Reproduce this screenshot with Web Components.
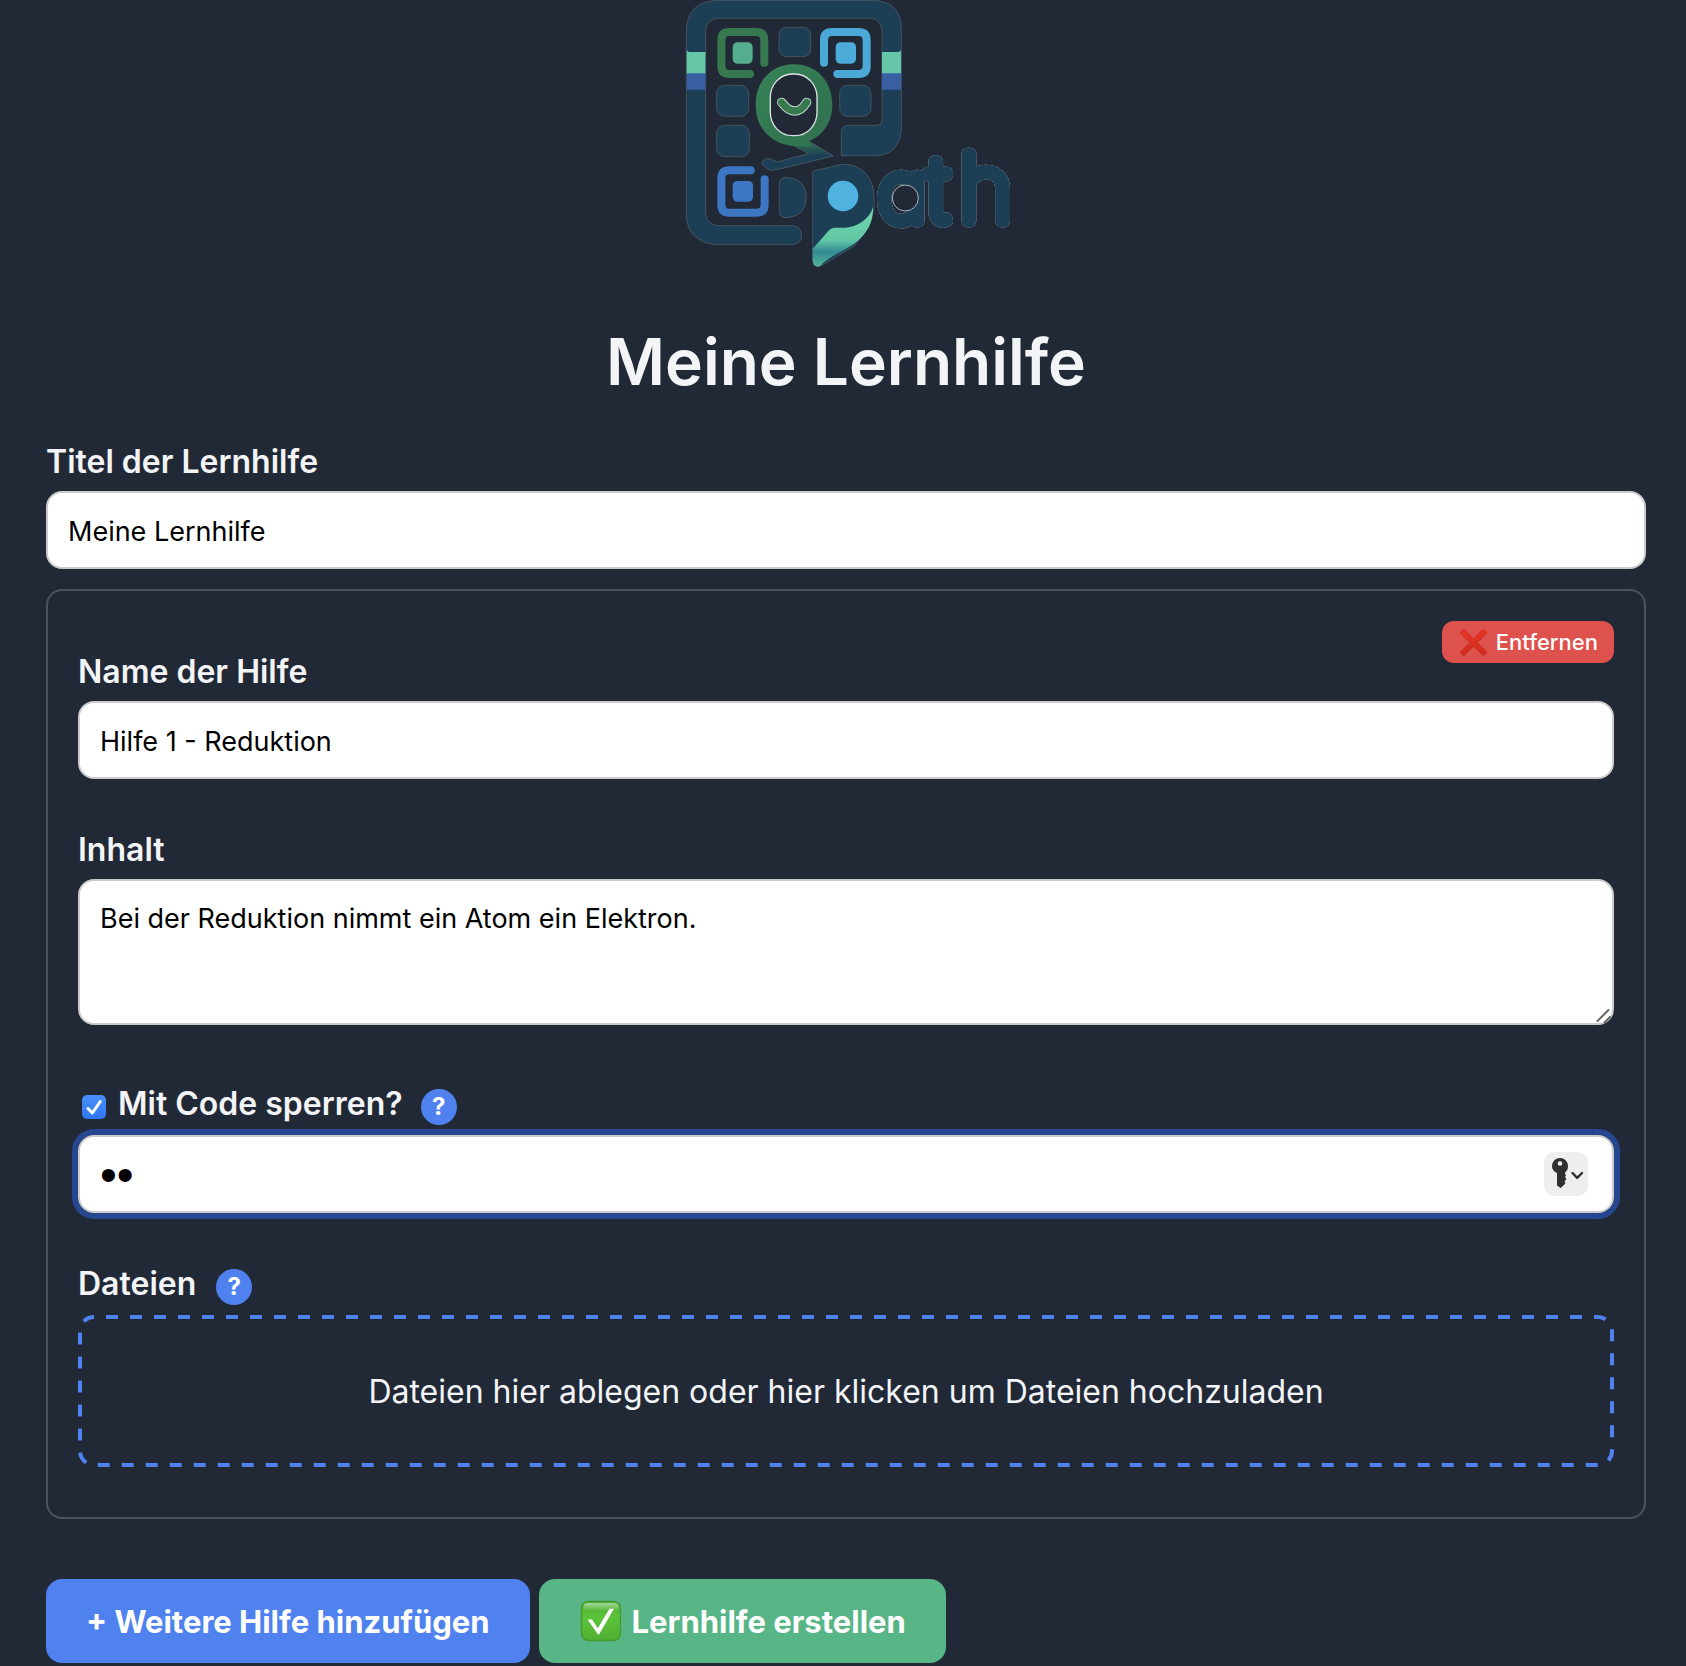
<!DOCTYPE html>
<html lang="de">
<head>
<meta charset="utf-8">
<meta name="viewport" content="width=device-width, initial-scale=1">
<title>Meine Lernhilfe</title>
<style>
  :root {
    --bg: #222936;
    --ink: #f3f4f6;
    --blue: #4f82ee;
    --green: #57b586;
    --red: #dd524c;
    --line: #4d525f;
    --ring: #264790;
  }
  body {
    margin: 0;
    background: var(--bg);
    color: var(--ink);
    font-family: Inter, "Liberation Sans", sans-serif;
    font-size: 32px;
    line-height: 39px;
  }
</style>
</head>
<body>
<lernhilfe-page></lernhilfe-page>

<template id="tpl-page">
  <style>
    :host { display: block; padding: 0 40px 3px 46px; }
    header { display: flex; flex-direction: column; align-items: center; gap: 56px; }
    h1 { margin: 0; font-size: 64px; line-height: 78px; font-weight: 600; }
    main { display: flex; flex-direction: column; gap: 20px; margin-top: 41px; }
    footer { display: flex; flex-wrap: wrap; gap: 9px; margin-top: 60px; }
  </style>
  <header>
    <qpath-logo></qpath-logo>
    <h1>Meine Lernhilfe</h1>
  </header>
  <main>
    <text-field label="Titel der Lernhilfe" value="Meine Lernhilfe"></text-field>
    <hilfe-card></hilfe-card>
  </main>
  <footer>
    <action-button>+ Weitere Hilfe hinzufügen</action-button>
    <action-button kind="create"><check-emoji></check-emoji>Lernhilfe erstellen</action-button>
  </footer>
</template>

<template id="tpl-card">
  <style>
    :host { display: flex; flex-direction: column; gap: 51px; padding: 30px 30px 50px; border: 2px solid var(--line); border-radius: 16px; }
    .first { --head: 70px; }
    lock-field { margin-top: 8px; }
  </style>
  <text-field class="first" label="Name der Hilfe" value="Hilfe 1 - Reduktion">
    <remove-button slot="action"></remove-button>
  </text-field>
  <text-field multiline label="Inhalt" value="Bei der Reduktion nimmt ein Atom ein Elektron."></text-field>
  <lock-field></lock-field>
  <drop-zone></drop-zone>
</template>

<template id="tpl-text">
  <style>
    :host { display: flex; flex-direction: column; gap: 10px; }
    .head { display: flex; justify-content: space-between; min-height: var(--head, 39px); }
    label { align-self: flex-end; font-weight: 600; }
    input, textarea {
      box-sizing: border-box; display: block; width: 100%; height: 78px; margin: 0; padding: 20px 20px 18px;
      border: 2px solid #ccc; border-radius: 16px; background: #fff; color: #000;
      font: 27px/36px Inter, "Liberation Sans", sans-serif; outline: none;
    }
    textarea { height: 146px; resize: none; }
    .area { display: grid; }
    .area > * { grid-area: 1 / 1; }
    .grip { align-self: end; justify-self: end; width: 18px; height: 18px; pointer-events: none; }
  </style>
  <div class="head"><label for="f"></label><slot name="action"></slot></div>
</template>

<template id="tpl-lock">
  <style>
    :host { display: flex; flex-direction: column; gap: 10px; }
    .head { display: flex; align-items: flex-end; height: 41px; }
    .tick { display: grid; width: 24px; height: 24px; margin: 0 12px 6px 4px; }
    .tick > * { grid-area: 1 / 1; }
    .tick input { appearance: none; width: 24px; height: 24px; margin: 0; border-radius: 5px; background: linear-gradient(#4a90fb, #2f76f6); }
    .tick svg { pointer-events: none; }
    label { align-self: flex-start; font-weight: 600; margin-right: 18px; }
    .box { display: grid; align-items: center; border-radius: 16px; box-shadow: 0 0 0 6px var(--ring); }
    .box > * { grid-area: 1 / 1; }
    .box input {
      box-sizing: border-box; width: 100%; height: 78px; margin: 0; padding: 0 20px;
      border: 2px solid #ccc; border-radius: 16px; background: #fff; color: #000;
      font: 48px/56px "Liberation Sans", Arial, sans-serif; outline: none;
    }
    button { justify-self: end; display: flex; width: 44px; height: 44px; margin: 0 26px 0 0; padding: 0; border: 0; border-radius: 10px; background: #eee; }
  </style>
  <div class="head">
    <span class="tick">
      <input type="checkbox" id="lock" checked>
      <svg width="24" height="24" viewBox="0 0 24 24" fill="none" stroke="#fff" stroke-width="3" stroke-linecap="round" stroke-linejoin="round"><path d="M6 13.5 10.3 18 18.3 6.5"/></svg>
    </span>
    <label for="lock">Mit Code sperren?</label>
    <help-badge></help-badge>
  </div>
  <div class="box">
    <input type="password" value="12" aria-label="Code">
    <button type="button" aria-label="Passwort einsetzen">
      <svg width="44" height="44" viewBox="0 0 44 44">
        <path fill="#2f2f2f" fill-rule="evenodd" d="M16 6a8 8 0 0 1 8 8c0 3-1 5-3 6.500v1l1 2-1 1.500 1.500 2-2 2.500 1 1.500-1.500 2-3.500 3-3.500-2.500V21C9.500 19.500 8 17 8 14a8 8 0 0 1 8-8zm0 3.200a2.300 2.300 0 1 0 0 4.600 2.300 2.300 0 0 0 0-4.600z"/>
        <path fill="none" stroke="#2f2f2f" stroke-width="2.400" stroke-linecap="round" stroke-linejoin="round" d="m28.500 21 4.700 4.800L38 21"/>
      </svg>
    </button>
  </div>
</template>

<template id="tpl-drop">
  <style>
    :host { display: flex; flex-direction: column; gap: 10px; }
    .head { display: flex; align-items: flex-end; gap: 20px; height: 41px; font-weight: 600; }
    .head span { align-self: flex-start; }
    .zone { display: grid; height: 152px; padding: 0; border: 0; background: none; color: inherit; font: inherit; cursor: pointer; }
    .zone > * { grid-area: 1 / 1; }
    .zone svg { width: 100%; height: 152px; }
    rect { width: calc(100% - 4px); height: 148px; }
    .zone span { place-self: center; }
  </style>
  <div class="head"><span>Dateien</span><help-badge></help-badge></div>
  <button class="zone" type="button">
    <svg aria-hidden="true"><rect x="2" y="2" rx="14" fill="none" stroke="#4f82ee" stroke-width="4" stroke-dasharray="12" stroke-dashoffset="12"/></svg>
    <span>Dateien hier ablegen oder hier klicken um Dateien hochzuladen</span>
  </button>
</template>

<template id="tpl-badge">
  <style>
    :host { display: block; }
    button { display: block; width: 36px; height: 36px; padding: 0; border: 0; border-radius: 50%; background: var(--blue); color: #fff; font: 700 24px/34px Inter, "Liberation Sans", sans-serif; text-align: center; }
  </style>
  <button type="button">?</button>
</template>

<template id="tpl-remove">
  <style>
    :host { display: block; }
    button { display: flex; align-items: center; gap: 8px; height: 42px; padding: 0 16px; border: 0; border-radius: 12px; background: var(--red); color: #fff; font: 500 22px/28px Inter, "Liberation Sans", sans-serif; }
  </style>
  <button type="button">
    <svg width="30" height="30" viewBox="0 0 30 30" aria-hidden="true">
      <defs><linearGradient id="r" x1="0" y1="0" x2="0" y2="1"><stop offset="0" stop-color="#ea3323"/><stop offset="1" stop-color="#cf2b20"/></linearGradient></defs>
      <path fill="url(#r)" stroke="#c23a2c" stroke-width=".7" d="M6.500 2.500 15.500 11.500 24.500 2.500Q25.500 2 26.500 3L28.500 5Q29 6 28.500 6.500L19.500 15.500 28.500 24.500Q29 25.500 28.500 26L26 28.500Q25 29 24.500 28.500L15.500 19.500 6.500 28.500Q6 29 5 28.500L2.500 26Q2 25 2.500 24.500L11.500 15.500 2.500 6.500Q2 6 2.500 5L4.500 3Q5.500 2 6.500 2.500z"/>
    </svg>Entfernen</button>
</template>

<template id="tpl-action">
  <style>
    :host { display: block; }
    button { display: flex; align-items: center; height: 84px; padding: 0 40px; border: 0; border-radius: 16px; background: var(--blue); color: #fff; font: 700 31px/39px Inter, "Liberation Sans", sans-serif; }
    :host([kind="create"]) button { background: var(--green); }
  </style>
  <button type="button"><slot></slot></button>
</template>

<template id="tpl-check">
  <style>:host { display: block; width: 42px; height: 42px; margin-right: 11px; } svg { display: block; }</style>
  <svg width="42" height="42" viewBox="0 0 42 42" aria-hidden="true">
    <defs>
      <linearGradient id="g" x1="0" y1="0" x2="0" y2="1"><stop offset="0" stop-color="#4bad32"/><stop offset=".4" stop-color="#5cc43a"/><stop offset="1" stop-color="#4fae32"/></linearGradient>
      <linearGradient id="s" x1="0" y1="0" x2="0" y2="1"><stop offset="0" stop-color="#fff" stop-opacity=".5"/><stop offset="1" stop-color="#fff" stop-opacity="0"/></linearGradient>
    </defs>
    <rect x="2.500" y="1.500" width="39" height="39" rx="7" fill="url(#g)" stroke="#459c2e" stroke-width="1.500"/>
    <rect x="4.500" y="3" width="35" height="8" rx="4" fill="url(#s)"/>
    <path fill="#fff" d="M8.500 19.500h4.500l5.800 8.800L30.500 8.700h4.500L20 34.500h-1z"/>
  </svg>
</template>

<template id="tpl-logo">
  <style>
    :host { display: block; width: 336px; height: 267px; }
    svg { display: block; width: 336px; height: 267px; }
    .n { fill: #1c3f55; stroke: #56636e; stroke-width: 2; }
    text { font-family: Inter, sans-serif; font-weight: 100; font-feature-settings: "cv11"; fill: #1c3f55; stroke: #1c3f55; stroke-width: 38; stroke-linejoin: round; stroke-linecap: round; filter: drop-shadow(0 0 1px #8d98a0) drop-shadow(0 0 1px #6d7880); }
  </style>
  <svg viewBox="24 0 1008 801" role="img" aria-label="Qpath">
    <defs>
      <linearGradient id="tail" x1="0" y1="0" x2="0" y2="1"><stop offset="0" stop-color="#72d8b0"/><stop offset=".55" stop-color="#62c8a4"/><stop offset=".75" stop-color="#348a92"/><stop offset="1" stop-color="#55b59c"/></linearGradient>
      <linearGradient id="q" x1="0" y1="0" x2="1" y2="1"><stop offset="0" stop-color="#388458"/><stop offset=".65" stop-color="#317450"/><stop offset=".85" stop-color="#337553"/><stop offset="1" stop-color="#1c3f55"/></linearGradient>
      <linearGradient id="qt" x1="0" y1="0" x2="0" y2="1"><stop offset="0" stop-color="#317450"/><stop offset=".5" stop-color="#1c3f55"/></linearGradient>
      <clipPath id="frame"><path d="M136 0H612Q694 6 694 88V386Q690 460 624 467H514V396Q514 377 534 376H620Q636 376 636 358V92Q632 60 606 55H140Q108 62 107 92V640Q110 674 144 677H368Q395 680 395 706 395 731 368 734H136Q52 724 49 645V88Q54 8 136 0z"/></clipPath>
    </defs>
    <path class="n" d="M136 1H612Q694 6 694 88V386Q690 460 624 467H514V396Q514 377 534 376H620Q636 376 636 358V92Q632 60 606 55H140Q108 62 107 92V640Q110 674 144 677H368Q395 680 395 706 395 731 368 734H136Q52 724 49 645V88Q54 8 136 1z"/>
    <g clip-path="url(#frame)">
      <path fill="#65c6a8" d="M49 146Q51 156 62 156H107V222H49zM694 146Q692 156 682 156H636V222H694z"/>
      <path fill="#385fa2" d="M49 220H107V269H49zM636 220H694V269H636z"/>
    </g>
    <g fill="none">
      <path stroke="#36794f" stroke-width="24" d="M283 188V120Q283 96 259 96H178Q154 96 154 120V198Q154 222 178 222H240" stroke-linecap="round"/>
      <path stroke="#4ba9d8" stroke-width="24" d="M462 188V120Q462 96 486 96H566Q590 96 590 120V198Q590 222 566 222H502" stroke-linecap="round"/>
      <path stroke="#3d77c4" stroke-width="24" d="M242 511H178Q154 511 154 535V614Q154 638 178 638H260Q284 638 284 614V538" stroke-linecap="round"/>
    </g>
    <rect x="188" y="127" width="60" height="64" rx="14" fill="#55ad90"/>
    <rect x="497" y="127" width="61" height="64" rx="14" fill="#4dabda"/>
    <rect x="188" y="543" width="61" height="62" rx="14" fill="#3d77c4"/>
    <g class="n">
      <rect x="327" y="82" width="95" height="88" rx="22"/>
      <rect x="140" y="256" width="96" height="93" rx="24"/>
      <rect x="509" y="256" width="94" height="93" rx="24"/>
      <rect x="140" y="376" width="98" height="94" rx="24"/>
      <path d="M328 548Q330 532 352 532 409 538 409 592 409 648 352 653 330 654 328 638z"/>
    </g>
    <path d="M274 491 284 478Q292 473 304 478L321 486 416 461 366 434 418 424 490 468 324 508Q304 514 294 508z" fill="url(#qt)" stroke="#56636e" stroke-width="2"/>
    <path fill="url(#q)" d="M372 193C440 193 487 244 487 314 487 368 458 408 414 424L424 440 366 438C300 430 257 382 257 314 257 244 304 193 372 193z"/>
    <rect x="301" y="222" width="140" height="185" rx="66" ry="70" fill="#222936" stroke="#dbe3e4" stroke-width="4"/>
    <path fill="none" stroke="#c4d6d0" stroke-width="28" stroke-linecap="round" d="M335 307Q354 333 374 333 394 333 410 307"/>
    <path fill="none" stroke="#36794f" stroke-width="22" stroke-linecap="round" d="M335 307Q354 333 374 333 394 333 410 307"/>
    <path class="n" d="M428 514 510 494C568 486 612 530 612 590V625Q600 690 550 740L500 770 456 796Q430 806 428 782z"/>
    <path fill="url(#tail)" d="M609 622C598 660 558 681 528 683 500 684 488 680 478 690L428 746V784Q432 804 450 799C478 766 520 758 562 724 594 696 610 666 609 622z"/>
    <circle cx="519" cy="588" r="46" fill="#4fb2df"/>
    <text y="663" aria-hidden="true"><tspan x="624" font-size="249">a</tspan><tspan x="772" font-size="265">t</tspan><tspan x="867" font-size="275">h</tspan></text>
    <circle cx="706" cy="594" r="39" fill="#222936" stroke="#aab4b9" stroke-width="3"/>
  </svg>
</template>

<script>
  // Clones the template with the given id into an open shadow root.
  class Base extends HTMLElement {
    constructor() {
      super();
      this.attachShadow({ mode: "open" })
        .append(document.getElementById(this.constructor.tpl).content.cloneNode(true));
    }
  }
  const simple = (name, tpl) => customElements.define(name, class extends Base { static tpl = tpl; });

  class TextField extends Base {
    static tpl = "tpl-text";
    connectedCallback() {
      const root = this.shadowRoot;
      if (root.getElementById("f")) return;
      root.querySelector("label").textContent = this.getAttribute("label");
      const multi = this.hasAttribute("multiline");
      const field = document.createElement(multi ? "textarea" : "input");
      field.id = "f";
      field.value = this.getAttribute("value");
      if (!multi) { field.type = "text"; root.append(field); return; }
      const area = document.createElement("div");
      area.className = "area";
      area.innerHTML = '<svg class="grip" viewBox="0 0 18 18" fill="none" stroke="#666" stroke-width="2" stroke-linecap="round"><path d="M1.500 14 12.500 3M8.500 15.500 14 10"/></svg>';
      area.prepend(field);
      root.append(area);
    }
  }

  customElements.define("text-field", TextField);
  simple("help-badge", "tpl-badge");
  simple("remove-button", "tpl-remove");
  simple("check-emoji", "tpl-check");
  simple("action-button", "tpl-action");
  simple("qpath-logo", "tpl-logo");
  simple("lock-field", "tpl-lock");
  simple("drop-zone", "tpl-drop");
  simple("hilfe-card", "tpl-card");
  simple("lernhilfe-page", "tpl-page");
</script>
</body>
</html>
